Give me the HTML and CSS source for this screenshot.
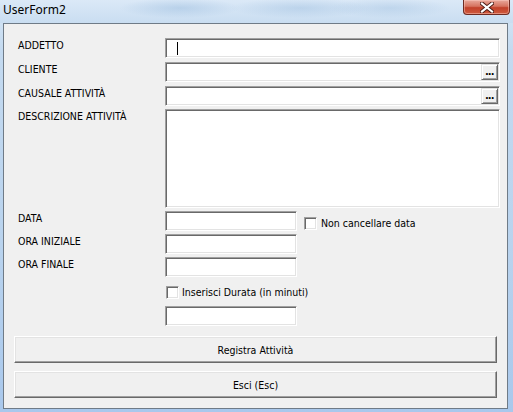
FILE: index.html
```html
<!DOCTYPE html>
<html lang="it">
<head>
    <meta charset="UTF-8">
    <meta name="viewport" content="width=device-width, initial-scale=1.0">
    <title>UserForm2</title>
    <link rel="stylesheet" href="styles.css">
</head>
<body>
    <div class="window">
        <div class="titlebar">
            <span class="title">UserForm2</span>
            <button class="close" title="Chiudi">
                <svg width="14" height="11" viewBox="0 0 14 11">
                    <path d="M2 1.5 L12 9.5 M12 1.5 L2 9.5" stroke="#4a1a14" stroke-width="4" stroke-linecap="square"/>
                    <path d="M2 1.5 L12 9.5 M12 1.5 L2 9.5" stroke="#ffffff" stroke-width="2.2" stroke-linecap="square"/>
                </svg>
            </button>
        </div>

        <div class="client">
            <div class="form">
                <div class="row row-loose">
                    <label class="lbl">ADDETTO</label>
                    <div class="textbox"><span class="caret"></span></div>
                </div>
                <div class="row row-loose">
                    <label class="lbl">CLIENTE</label>
                    <div class="textbox combo"><span class="dots">...</span></div>
                </div>
                <div class="row">
                    <label class="lbl">CAUSALE ATTIVITÀ</label>
                    <div class="textbox combo"><span class="dots">...</span></div>
                </div>
                <div class="row">
                    <label class="lbl">DESCRIZIONE ATTIVITÀ</label>
                    <div class="textbox memo"></div>
                </div>
                <div class="row">
                    <label class="lbl">DATA</label>
                    <div class="field">
                        <div class="textbox short"></div>
                        <label class="check check-side"><span class="box"></span>Non cancellare data</label>
                    </div>
                </div>
                <div class="row">
                    <label class="lbl">ORA INIZIALE</label>
                    <div class="field"><div class="textbox short"></div></div>
                </div>
                <div class="row">
                    <label class="lbl">ORA FINALE</label>
                    <div class="field"><div class="textbox short"></div></div>
                </div>
                <div class="row row-check">
                    <span></span>
                    <label class="check check-under"><span class="box"></span>Inserisci Durata (in minuti)</label>
                </div>
                <div class="row">
                    <span></span>
                    <div class="field"><div class="textbox short"></div></div>
                </div>
            </div>

            <div class="actions">
                <button class="cmd">Registra Attività</button>
                <button class="cmd">Esci (Esc)</button>
            </div>
        </div>
    </div>
</body>
</html>
```

FILE: styles.css
```css
* {
    box-sizing: border-box;
}
body {
    margin: 0;
    font-family: "DejaVu Sans Condensed", "DejaVu Sans", sans-serif;
    font-size: 10.5px;
    color: #000;
}
.window {
    width: 513px;
    height: 412px;
    display: flex;
    flex-direction: column;
    padding: 0 5px 3px 3px;
    background: linear-gradient(180deg, #d9e8f6 0%, #c4daf0 12%, #b9d3ee 60%, #a9c8ec 100%);
}

/* title bar */
.titlebar {
    height: 23px;
    margin: 0 -5px 0 -3px;
    padding-left: 3px;
    display: flex;
    align-items: flex-start;
    justify-content: space-between;
    background:
        radial-gradient(ellipse 60px 10px at 180px 8px, rgba(150, 185, 220, 0.45), transparent),
        radial-gradient(ellipse 70px 10px at 300px 8px, rgba(150, 185, 220, 0.4), transparent),
        radial-gradient(ellipse 60px 10px at 390px 8px, rgba(150, 185, 220, 0.35), transparent),
        linear-gradient(180deg, #dbe9f7 0%, #c9ddf1 100%);
}
.title {
    font-family: "Noto Sans", "Open Sans", sans-serif;
    font-size: 12px;
    line-height: 14px;
    margin-top: 3px;
    color: #000;
}
.close {
    width: 47px;
    height: 15px;
    margin-right: 3px;
    padding: 0;
    border: 1px solid #6e2b22;
    border-top: none;
    border-radius: 0 0 4px 4px;
    background: linear-gradient(180deg, #e9a99c 0%, #d6735f 45%, #c2412a 55%, #cf5a3e 100%);
    box-shadow: inset 0 0 0 1px rgba(255, 210, 200, 0.45);
    display: flex;
    align-items: center;
    justify-content: center;
}

/* form body */
.client {
    flex: 1;
    border: 1px solid #6f7b87;
    background: #f0f0f0;
}
.form {
    padding: 14px 7px 0 14px;
}
.row {
    display: grid;
    grid-template-columns: 147px 1fr;
    margin-bottom: 3px;
}
.row-loose {
    margin-bottom: 4px;
}
.row-check {
    margin-top: 9px;
    margin-bottom: 7px;
}
.lbl {
    line-height: 14px;
    white-space: nowrap;
}
.field {
    display: flex;
    align-items: flex-start;
}

/* sunken 3D edge, classic controls */
.textbox {
    height: 20px;
    background: #fff;
    border: 1px solid;
    border-color: #a0a0a0 #fff #fff #a0a0a0;
    box-shadow: inset 1px 1px 0 #696969, inset -1px -1px 0 #e3e3e3;
    display: flex;
    align-items: center;
}
.textbox.memo {
    height: 99px;
}
.textbox.short {
    width: 132px;
}
.textbox.combo {
    justify-content: flex-end;
    padding-right: 1px;
}
.caret {
    width: 1px;
    height: 13px;
    margin-left: 11px;
    background: #000;
}
.dots {
    width: 17px;
    height: 16px;
    background: #f0f0f0;
    border: 1px solid;
    border-color: #e3e3e3 #696969 #696969 #e3e3e3;
    box-shadow: inset 1px 1px 0 #fff, inset -1px -1px 0 #a0a0a0;
    font-family: "Liberation Sans", sans-serif;
    font-size: 12px;
    font-weight: bold;
    line-height: 12px;
    text-align: center;
    letter-spacing: -0.5px;
}

.check {
    display: flex;
    align-items: center;
    gap: 4px;
    line-height: 13px;
    white-space: nowrap;
}
.check-side {
    margin: 6px 0 0 7px;
}
.check-under {
    margin-left: 1px;
    gap: 3px;
}
.box {
    width: 13px;
    height: 13px;
    background: #fff;
    border: 1px solid;
    border-color: #a0a0a0 #fff #fff #a0a0a0;
    box-shadow: inset 1px 1px 0 #696969, inset -1px -1px 0 #e3e3e3;
}

/* command buttons */
.actions {
    display: flex;
    flex-direction: column;
    gap: 8px;
    padding: 7px 10px 0 10px;
}
.cmd {
    height: 27px;
    font: inherit;
    color: #000;
    background: #f0f0f0;
    border: 1px solid;
    border-color: #fff #696969 #696969 #fff;
    box-shadow: inset -1px -1px 0 #a0a0a0, inset 1px 1px 0 #e3e3e3;
    padding: 0;
}
```
